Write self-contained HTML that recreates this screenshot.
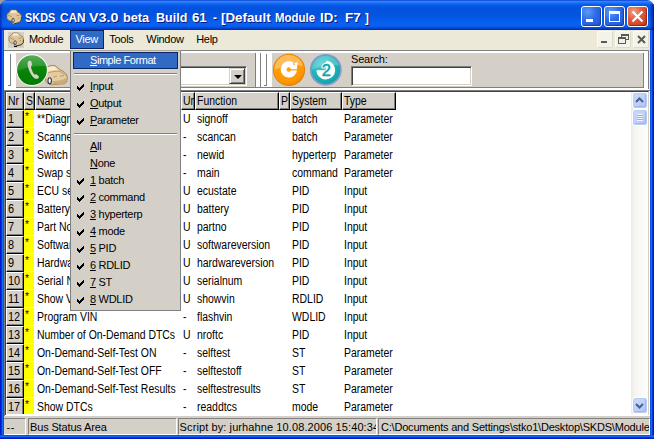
<!DOCTYPE html>
<html>
<head>
<meta charset="utf-8">
<title>SKDS CAN V3.0 beta</title>
<style>
*{box-sizing:border-box;margin:0;padding:0}
html,body{width:654px;height:439px;overflow:hidden;background:#fff}
body{position:relative;font-family:"Liberation Sans",sans-serif;font-size:11px;color:#000}
.abs{position:absolute}
#win{position:absolute;left:0;top:0;width:654px;height:439px;background:#0a3fd9;overflow:hidden}
.bl{position:absolute;top:30px;width:4px;height:409px}
#title{position:absolute;left:0;top:0;width:654px;height:30px;
 background:linear-gradient(to bottom,#0a3dd0 0,#2f83fb 1.5px,#1a70f4 3px,#0759e6 5px,#0453de 8px,#0453de 14px,#0558e6 18px,#0861f1 23px,#0860f0 26px,#0650dd 27.5px,#0038c0 29px,#002f9e 30px);
 border-radius:7px 7px 0 0}
.corner{position:absolute;top:0;width:8px;height:8px;background:#a39c8c}
.tt{position:absolute;top:9.5px;font-weight:bold;font-size:13px;color:#fff;white-space:pre;text-shadow:1px 1px 0 #0a1883;line-height:16px;transform-origin:0 0}
#client{position:absolute;left:4px;top:30px;width:646px;height:405px;background:#d4d0c8}
#menubar{position:absolute;left:4px;top:30px;width:646px;height:20px;background:#ece9d8}
.mi{position:absolute;top:30px;height:19px;line-height:19px;font-size:11px;white-space:pre;letter-spacing:-0.3px}
.mi.sel{background:#316ac5;color:#fff;border:1px solid #0a246a;line-height:17px}
/* grid */
#grid{position:absolute;left:6px;top:92px;width:642px;height:322px;background:#fff;overflow:hidden}
.hd{position:absolute;top:0;height:18px;background:#d4d0c8;border-top:1px solid #fff;border-left:1px solid #fff;border-right:1px solid #000;border-bottom:1px solid #000;box-shadow:inset -1px -1px 0 #808080;font-size:12px;line-height:17px;white-space:pre;overflow:hidden;padding-left:1.4px}
.hd b,.c{display:inline-block;font-weight:normal;transform:scaleX(.87);transform-origin:0 0;white-space:pre}
.row{position:absolute;left:0;width:626px;height:18px;font-size:12px;line-height:18px;white-space:pre}
.row span{position:absolute;top:0}
.nr{left:0;width:18px;height:18px;background:#d4d0c8;border-top:1px solid #fff;border-left:1px solid #fff;border-right:1px solid #000;border-bottom:1px solid #000;box-shadow:inset -1px -1px 0 #808080;line-height:15px;padding-left:1px;font-size:13px;overflow:hidden}
.nr i{font-style:normal;display:inline-block;transform:scaleX(.84);transform-origin:0 0;white-space:pre}
.s{left:18px;width:10px;height:17px;background:#ff0;font-size:10px;line-height:11px;padding-left:0;padding-top:2px;font-family:"Liberation Mono",monospace}
.n{left:31px}.u{left:177px}.f{left:191px}.sy{left:286px}.t{left:338px}
/* dropdown */
#menu{position:absolute;left:70px;top:50px;width:111px;height:261px;background:#d4d0c8;border:1px solid #808080;border-top-color:#aca899;z-index:5}
.it{position:absolute;left:2px;width:105px;height:17px;line-height:17px;font-size:11px;white-space:pre;padding-left:17px;letter-spacing:-0.3px}
.it.sel{background:#316ac5;color:#fff;border:1px solid #0a246a;line-height:15px;padding-left:16px;letter-spacing:-0.45px}
.it u{text-decoration:underline}
.sep{position:absolute;left:3px;width:103px;height:2px;border-top:1px solid #808080;border-bottom:1px solid #fff}
.ck{position:absolute;left:4px;top:6px;width:7px;height:7px}
.it.sel .ck{left:3px;top:4px}
/* status */
.sp{position:absolute;top:418px;height:17px;border-top:1px solid #808080;border-left:1px solid #808080;border-right:1px solid #fff;border-bottom:1px solid #fff;font-size:11px;line-height:17px;white-space:pre;overflow:hidden;padding-left:1px;background:#d4d0c8;letter-spacing:-0.15px}
.tb{position:absolute;top:6px;width:21px;height:21px;border:1px solid #fff;border-radius:3px;background:radial-gradient(circle at 30% 25%,#5a9bf8 0%,#2f6ae6 45%,#2353cf 100%);box-shadow:inset -1px -1px 1px rgba(0,20,120,.45)}
.tb.cl{background:radial-gradient(circle at 30% 25%,#f2a080 0%,#e0563a 45%,#c03815 100%);box-shadow:inset -1px -1px 1px rgba(100,10,0,.5)}
.mdi{position:absolute;top:31px;width:16px;height:17px;background:#f4f3ea;border:1px solid #fbfaf4;border-right-color:#dedbcb;border-bottom-color:#dedbcb;border-radius:2px}
.gr{position:absolute;top:54px;width:3px;height:32px;border-right:1px solid #808080;border-bottom:1px solid #808080}
.sunk{background:#fff;border:1px solid #808080;border-right-color:#fff;border-bottom-color:#fff;box-shadow:inset 1px 1px 0 #404040,inset -1px -1px 0 #d4d0c8}
#sb{position:absolute;left:625px;top:0;width:17px;height:322px;background:linear-gradient(to right,#ecebe3 0,#f6f5f0 4px,#fbfbf8 12px,#fdfdfb 100%)}
.sbb{position:absolute;left:1px;width:16px;height:17px;border:1px solid #fff;border-radius:3.5px;background:linear-gradient(135deg,#cbd9fd 0%,#bdcffb 55%,#aec0f3 100%);box-shadow:inset 0 0 0 1px #b9caf5, inset -1px -1px 0 1px #a4b8ec}
</style>
</head>
<body>
<div id="win">
 <div class="corner" style="left:0"></div><div class="corner" style="right:0;background:#fff"></div>
 <div id="title">
  <div class="abs" style="left:0;top:4px;width:3px;height:26px;background:linear-gradient(to right,rgba(0,10,140,.55),rgba(0,10,140,0))"></div>
  <div class="abs" style="left:650px;top:4px;width:4px;height:26px;background:linear-gradient(to left,rgba(0,8,120,.75),rgba(0,8,120,0))"></div>
  <svg class="abs" style="left:0;top:0" width="0" height="0"><defs><g id="car"><path d="M2.2 4 C4 2.2 8 1.6 10.5 2.2 C12.5 3.5 14 5.2 15.5 6.3 C18.5 7.6 21 9.2 22.3 11.5 C23 13.5 22.8 16.5 22 18.5 C21 20 19 20.6 17 20.4 L8 21.2 C6.5 21.4 5 21 4 20 C2.4 19.6 1.4 18.4 1.2 16.5 L1 8 C1 6.2 1.4 5 2.2 4 Z" fill="#e4cca2" stroke="#9c7c48" stroke-width="0.9"/><path d="M3 4.6 C5 3 8 2.6 10.2 3 L13.6 6.6 C10 6.4 6 7 3.2 8.4 Z" fill="#f6ead2"/><path d="M3.2 9.6 C7 8 11 7.6 14.6 7.8 C17.5 8.8 20 10.4 21.4 12.2 M9 13.4 L12.5 12.6 M15.5 12.8 L19.5 11.8" stroke="#b8945c" stroke-width="0.9" fill="none"/><path d="M8 21 L17 20.2 C19.5 20.2 21.4 19.4 22 17.6 L22.4 14 C20 16 14 17.5 8.5 17.6 Z" fill="#cdaa78"/><ellipse cx="5.2" cy="17.2" rx="1.7" ry="3" fill="#fff" stroke="#2a2a50" stroke-width="1.1"/></g><g id="scar"><path d="M1 5.2 L3.4 3.2 L5 1 L10.2 1 L11.6 3 L14.6 5 L15.6 8 L15.5 11 L13.6 13.6 L8 15 L6.4 14.6 L6 12.2 L3 11.6 L1 9.6 Z" fill="#dfc69a" stroke="#8c6e3e" stroke-width="0.7"/><path d="M5.2 1.6 L10 1.6 L11 3.6 L4.4 3.9 Z" fill="#f7ecd6"/><path d="M15.4 8 L15.3 11 L13.5 13.5 L8 14.9" stroke="#3a3010" stroke-width="0.9" fill="none"/><path d="M2 6 L6 8 M10.5 6.8 L13.5 6.2 M11.8 9.4 L13.2 9" stroke="#a8864e" stroke-width="0.8" fill="none"/><ellipse cx="7.1" cy="11.4" rx="1.1" ry="2.1" fill="#fff" stroke="#2a2444" stroke-width="0.9"/></g></defs></svg>
  <svg class="abs" style="left:5.5px;top:8.5px" width="16" height="16" viewBox="0 0 16 16"><use href="#scar"/></svg>
  <div class="tb" style="left:581px"><div class="abs" style="left:4px;top:12px;width:7px;height:3px;background:#fff"></div></div>
  <div class="tb" style="left:604px"><div class="abs" style="left:4px;top:4px;width:11px;height:11px;border:1px solid #fff;border-top-width:3px"></div></div>
  <div class="tb cl" style="left:627px"><svg class="abs" style="left:3px;top:3px" width="13" height="13" viewBox="0 0 13 13"><path d="M1.5 1.5 L11.5 11.5 M11.5 1.5 L1.5 11.5" stroke="#fff" stroke-width="2.2" fill="none"/></svg></div>
  <span class="tt" style="left:25.4px;transform:scaleX(0.839)">SKDS</span><span class="tt" style="left:59.5px;transform:scaleX(0.912)">CAN</span><span class="tt" style="left:88.5px;transform:scaleX(1.103)">V3.0</span><span class="tt" style="left:122.5px;transform:scaleX(0.980)">beta</span><span class="tt" style="left:156.1px;transform:scaleX(0.963)">Build</span><span class="tt" style="left:191.7px;transform:scaleX(1.016)">61</span><span class="tt" style="left:213.1px;transform:scaleX(0.899)">-</span><span class="tt" style="left:220.8px;transform:scaleX(1.025)">[Default</span><span class="tt" style="left:274.9px;transform:scaleX(0.879)">Module</span><span class="tt" style="left:320.2px;transform:scaleX(1.021)">ID:</span><span class="tt" style="left:344.5px;transform:scaleX(1.035)">F7</span><span class="tt" style="left:364.5px;transform:scaleX(0.899)">]</span>
 </div>
 <div class="bl" style="left:0;background:linear-gradient(to right,#0019cf 0,#0019cf 1px,#0831d9 1px,#0831d9 2px,#166aee 2px,#166aee 3px,#0855dd 3px)"></div>
 <div class="bl" style="left:650px;background:linear-gradient(to left,#0019cf 0,#0019cf 1px,#0831d9 1px,#0831d9 2px,#166aee 2px,#166aee 3px,#0855dd 3px)"></div>
 <div class="abs" style="left:0;top:435px;width:654px;height:4px;background:linear-gradient(to top,#0019cf 0,#0019cf 1px,#0831d9 1px,#0831d9 2px,#166aee 2px,#166aee 3px,#0855dd 3px)"></div>
 <div id="client"></div>
 <div id="menubar"></div>
 <!-- menu bar -->
 <div class="abs" style="left:8px;top:32px;width:16px;height:16px;background:#d4d0c8"></div>
 <svg class="abs" style="left:8px;top:31.5px" width="16" height="15" viewBox="0 0 16 16" preserveAspectRatio="none"><use href="#scar"/></svg>
 <div class="abs" style="left:14px;top:46px;width:3px;height:1px;background:#000"></div>
 <div class="mi" style="left:29px">Module</div>
 <div class="mi sel" style="left:70px;width:34px;padding-left:4.5px">View</div>
 <div class="mi" style="left:109.3px">Tools</div>
 <div class="mi" style="left:146.3px">Window</div>
 <div class="mi" style="left:196.2px">Help</div>
 <div class="mdi" style="left:597px"><div class="abs" style="left:3px;top:9px;width:6px;height:2px;background:#5a5a52"></div></div>
 <div class="mdi" style="left:615px"><div class="abs" style="left:5px;top:2px;width:8px;height:6px;border:1px solid #5a5a52;border-top-width:2px"></div><div class="abs" style="left:2px;top:5px;width:8px;height:7px;border:1px solid #5a5a52;border-top-width:2px;background:#f4f2e8"></div></div>
 <div class="mdi" style="left:633px"><svg class="abs" style="left:3px;top:3px" width="9" height="9" viewBox="0 0 9 9"><path d="M1 1 L8 8 M8 1 L1 8" stroke="#5a5a52" stroke-width="2" fill="none"/></svg></div>
 <!-- toolbar -->
 <div class="abs" style="left:4px;top:50px;width:646px;height:1px;background:#808080"></div>
 <div class="abs" style="left:4px;top:51px;width:646px;height:39px;background:#fff"></div>
 <div class="abs" style="left:648px;top:50px;width:1px;height:39px;background:#808080"></div>
 <div class="abs" style="left:649px;top:50px;width:1px;height:40px;background:#ece9d8"></div>
 <div class="abs" style="left:16px;top:53px;width:240px;height:35px;background:#d4d0c8;border-right:1px solid #808080;border-bottom:1px solid #808080"></div>
 <div class="abs" style="left:260px;top:53px;width:1px;height:35px;background:#808080"></div>
 <div class="abs" style="left:272px;top:53px;width:372px;height:35px;background:#d4d0c8;border-right:1px solid #808080;border-bottom:1px solid #808080"></div>
 <div class="abs" style="left:256px;top:87px;width:16px;height:1px;background:#808080"></div>
 <div class="gr" style="left:8px"></div>
 <div class="gr" style="left:264px"></div>
 <!-- green phone + car -->
 <svg class="abs" style="left:15px;top:52px" width="54" height="36" viewBox="0 0 54 36">
  <defs>
   <linearGradient id="gg" x1="0" y1="0" x2="0" y2="1"><stop offset="0" stop-color="#138c13"/><stop offset="1" stop-color="#007c00"/></linearGradient>
   <linearGradient id="gl" x1="0" y1="0" x2="0" y2="1"><stop offset="0" stop-color="#fff" stop-opacity=".30"/><stop offset="1" stop-color="#fff" stop-opacity=".10"/></linearGradient>
  </defs>
  <g transform="translate(29.5,11.5)"><use href="#car"/></g>
  <circle cx="17" cy="18.1" r="15.9" fill="#fff"/>
  <circle cx="17" cy="18.1" r="14.9" fill="url(#gg)"/>
  <path d="M2.4 19 A14.6 14.6 0 0 1 31.2 14 C21 13.5 10 15.5 2.4 19 Z" fill="url(#gl)"/>
  <path d="M13.2 9.6 C14.2 8.4 16.2 8.6 16.6 10.2 L17 12.6 C17.2 13.6 16 14 15.9 14.8 C16.4 17.6 17.6 20.4 19.2 22.4 C19.9 22.6 20.6 21.9 21.5 22.4 L23.3 23.8 C24.4 24.8 23.8 26.4 22.4 26.7 C20.8 27.1 19 26.4 17.8 24.8 C15 21.4 13.2 16.8 12.7 13 C12.5 11.6 12.5 10.5 13.2 9.6 Z" fill="#d6d3ca"/>
 </svg>
 <!-- combo -->
 <div class="abs sunk" style="left:101px;top:66px;width:146px;height:20px"></div>
 <div class="abs" style="left:229px;top:68px;width:16px;height:16px;background:#d4d0c8;border:1px solid #d4d0c8;border-right-color:#404040;border-bottom-color:#404040;box-shadow:inset 1px 1px 0 #fff,inset -1px -1px 0 #808080"><div class="abs" style="left:3.5px;top:6px;width:0;height:0;border-left:4px solid transparent;border-right:4px solid transparent;border-top:4px solid #000"></div></div>
 <!-- orange -->
 <svg class="abs" style="left:272px;top:53px" width="34" height="34" viewBox="0 0 34 34">
  <defs><radialGradient id="og" cx="0.45" cy="0.4" r="0.62"><stop offset="0" stop-color="#ffa21a"/><stop offset="0.8" stop-color="#ff9800"/><stop offset="1" stop-color="#f08a00"/></radialGradient></defs>
  <circle cx="17" cy="16.8" r="16.1" fill="#e2820a"/>
  <circle cx="17" cy="16.8" r="15.2" fill="url(#og)"/>
  <path d="M2.6 17 A14.4 14.4 0 0 1 31 13 C21 11 9 13 2.6 17 Z" fill="#fff" fill-opacity=".33"/>
  <path d="M16.8 8.2 A8.2 8.2 0 1 0 25 17.4 L18.9 17.4 A2.3 2.3 0 1 1 16.8 14.2 A2.3 2.3 0 0 1 18.9 16.3 L24.9 16.3 L25.6 9 L22.6 10.2 A8.2 8.2 0 0 0 16.8 8.2 Z" fill="#fff"/>
  <path d="M21 9.4 L23.2 11.6 L21.4 12 Z" fill="#ff9c0c"/>
 </svg>
 <!-- teal -->
 <svg class="abs" style="left:309px;top:53px" width="34" height="34" viewBox="0 0 34 34">
  <defs><radialGradient id="tg" cx="0.4" cy="0.35" r="0.75"><stop offset="0" stop-color="#4fcfd0"/><stop offset="0.55" stop-color="#1fb6b8"/><stop offset="1" stop-color="#0c9ea2"/></radialGradient></defs>
  <circle cx="16.8" cy="16.8" r="15.9" fill="#8798cc"/>
  <circle cx="16.8" cy="16.8" r="14.2" fill="url(#tg)"/>
  <path d="M3 17 A13.8 13.8 0 0 1 30 12.6 C21 10.6 9 13 3 17 Z" fill="#fff" fill-opacity=".22"/>
  <path d="M16.8 17.2 L7.4 17.2 A9.4 9.4 0 1 0 18.8 7.9 C17.4 7.6 16.8 8.4 16.8 9.6 Z" fill="#fff"/>
  <text x="17.4" y="23.4" font-family="Liberation Sans, sans-serif" font-size="16.5" fill="#fff" text-anchor="middle" stroke="#fff" stroke-width="2.4" stroke-linejoin="round">2</text><text x="17.4" y="23.4" font-family="Liberation Sans, sans-serif" font-size="16.5" fill="#0fa4a8" text-anchor="middle" stroke="#0fa4a8" stroke-width="0.5">2</text>
 </svg>
 <div class="abs" style="left:351px;top:52px;font-size:11px;line-height:14px;letter-spacing:-0.2px">Search:</div>
 <div class="abs sunk" style="left:351px;top:66px;width:121px;height:20px"></div>
 <!-- grid frame -->
 <div class="abs" style="left:4px;top:90px;width:646px;height:326px;background:#fff;border-left:1px solid #808080;border-top:1px solid #808080"></div>
 <div class="abs" style="left:5px;top:91px;width:644px;height:324px;border-left:1px solid #404040;border-top:1px solid #404040;border-right:1px solid #d4d0c8"></div>
 <div id="grid">
  <div class="hd" style="left:0;width:18px"><b>Nr</b></div>
  <div class="hd" style="left:18px;width:11px"><b>S</b></div>
  <div class="hd" style="left:29px;width:146px"><b>Name</b></div>
  <div class="hd" style="left:175px;width:14px"><b>Unit</b></div>
  <div class="hd" style="left:189px;width:84px"><b>Function</b></div>
  <div class="hd" style="left:273px;width:11px"><b>P</b></div>
  <div class="hd" style="left:284px;width:52px"><b>System</b></div>
  <div class="hd" style="left:336px;width:54px"><b>Type</b></div>
  <div id="sb">
   <div class="sbb" style="top:0"><svg class="abs" style="left:1.7px;top:4px" width="9" height="6" viewBox="0 0 9 6"><path d="M1 5 L4.5 1.5 L8 5" stroke="#4d6185" stroke-width="2" fill="none"/></svg></div>
   <div class="sbb" style="top:17px"><div class="abs" style="left:4px;top:4px;width:6px;height:7px;background:repeating-linear-gradient(to bottom,#eef4fe 0,#eef4fe 1px,#8cb0f8 1px,#8cb0f8 2px)"></div></div>
   <div class="sbb" style="top:305px"><svg class="abs" style="left:1.7px;top:5px" width="9" height="6" viewBox="0 0 9 6"><path d="M1 1 L4.5 4.5 L8 1" stroke="#4d6185" stroke-width="2" fill="none"/></svg></div>
  </div>
   <div class="row" style="top:18px"><span class="nr"><i>1</i></span><span class="s">*</span><span class="c n">**Diagnostic Session</span><span class="c u">U</span><span class="c f">signoff</span><span class="c sy">batch</span><span class="c t">Parameter</span></div>
   <div class="row" style="top:36px"><span class="nr"><i>2</i></span><span class="s">*</span><span class="c n">Scanner</span><span class="c u">-</span><span class="c f">scancan</span><span class="c sy">batch</span><span class="c t">Parameter</span></div>
   <div class="row" style="top:54px"><span class="nr"><i>3</i></span><span class="s">*</span><span class="c n">Switch to new ID</span><span class="c u">-</span><span class="c f">newid</span><span class="c sy">hyperterp</span><span class="c t">Parameter</span></div>
   <div class="row" style="top:72px"><span class="nr"><i>4</i></span><span class="s">*</span><span class="c n">Swap scripts</span><span class="c u">-</span><span class="c f">main</span><span class="c sy">command</span><span class="c t">Parameter</span></div>
   <div class="row" style="top:90px"><span class="nr"><i>5</i></span><span class="s">*</span><span class="c n">ECU security state</span><span class="c u">U</span><span class="c f">ecustate</span><span class="c sy">PID</span><span class="c t">Input</span></div>
   <div class="row" style="top:108px"><span class="nr"><i>6</i></span><span class="s">*</span><span class="c n">Battery Voltage</span><span class="c u">U</span><span class="c f">battery</span><span class="c sy">PID</span><span class="c t">Input</span></div>
   <div class="row" style="top:126px"><span class="nr"><i>7</i></span><span class="s">*</span><span class="c n">Part No.</span><span class="c u">U</span><span class="c f">partno</span><span class="c sy">PID</span><span class="c t">Input</span></div>
   <div class="row" style="top:144px"><span class="nr"><i>8</i></span><span class="s">*</span><span class="c n">Software Version</span><span class="c u">U</span><span class="c f">softwareversion</span><span class="c sy">PID</span><span class="c t">Input</span></div>
   <div class="row" style="top:162px"><span class="nr"><i>9</i></span><span class="s">*</span><span class="c n">Hardware Version</span><span class="c u">U</span><span class="c f">hardwareversion</span><span class="c sy">PID</span><span class="c t">Input</span></div>
   <div class="row" style="top:180px"><span class="nr"><i>10</i></span><span class="s">*</span><span class="c n">Serial Number</span><span class="c u">U</span><span class="c f">serialnum</span><span class="c sy">PID</span><span class="c t">Input</span></div>
   <div class="row" style="top:198px"><span class="nr"><i>11</i></span><span class="s">*</span><span class="c n">Show VIN</span><span class="c u">U</span><span class="c f">showvin</span><span class="c sy">RDLID</span><span class="c t">Input</span></div>
   <div class="row" style="top:216px"><span class="nr"><i>12</i></span><span class="s">*</span><span class="c n">Program VIN</span><span class="c u">-</span><span class="c f">flashvin</span><span class="c sy">WDLID</span><span class="c t">Input</span></div>
   <div class="row" style="top:234px"><span class="nr"><i>13</i></span><span class="s">*</span><span class="c n">Number of On-Demand DTCs</span><span class="c u">U</span><span class="c f">nroftc</span><span class="c sy">PID</span><span class="c t">Input</span></div>
   <div class="row" style="top:252px"><span class="nr"><i>14</i></span><span class="s">*</span><span class="c n">On-Demand-Self-Test ON</span><span class="c u">-</span><span class="c f">selftest</span><span class="c sy">ST</span><span class="c t">Parameter</span></div>
   <div class="row" style="top:270px"><span class="nr"><i>15</i></span><span class="s">*</span><span class="c n">On-Demand-Self-Test OFF</span><span class="c u">-</span><span class="c f">selftestoff</span><span class="c sy">ST</span><span class="c t">Parameter</span></div>
   <div class="row" style="top:288px"><span class="nr"><i>16</i></span><span class="s">*</span><span class="c n">On-Demand-Self-Test Results</span><span class="c u">-</span><span class="c f">selftestresults</span><span class="c sy">ST</span><span class="c t">Parameter</span></div>
   <div class="row" style="top:306px"><span class="nr"><i>17</i></span><span class="s">*</span><span class="c n">Show DTCs</span><span class="c u">-</span><span class="c f">readdtcs</span><span class="c sy">mode</span><span class="c t">Parameter</span></div>
 </div>
 <div id="menu">
   <div class="it sel" style="top:1px"><u>S</u>imple Format</div>
   <div class="sep" style="top:22px"></div>
   <div class="it " style="top:27px"><svg class="ck" viewBox="0 0 7 7" shape-rendering="crispEdges"><path d="M0 2H1V3H2V4H3V3H4V2H5V1H6V0H7V3H6V4H5V5H4V6H3V7H2V6H1V5H0Z" fill="#000"/></svg><u>I</u>nput</div>
   <div class="it " style="top:44px"><svg class="ck" viewBox="0 0 7 7" shape-rendering="crispEdges"><path d="M0 2H1V3H2V4H3V3H4V2H5V1H6V0H7V3H6V4H5V5H4V6H3V7H2V6H1V5H0Z" fill="#000"/></svg><u>O</u>utput</div>
   <div class="it " style="top:61px"><svg class="ck" viewBox="0 0 7 7" shape-rendering="crispEdges"><path d="M0 2H1V3H2V4H3V3H4V2H5V1H6V0H7V3H6V4H5V5H4V6H3V7H2V6H1V5H0Z" fill="#000"/></svg><u>P</u>arameter</div>
   <div class="sep" style="top:82px"></div>
   <div class="it " style="top:87px"><u>A</u>ll</div>
   <div class="it " style="top:104px"><u>N</u>one</div>
   <div class="it " style="top:121px"><svg class="ck" viewBox="0 0 7 7" shape-rendering="crispEdges"><path d="M0 2H1V3H2V4H3V3H4V2H5V1H6V0H7V3H6V4H5V5H4V6H3V7H2V6H1V5H0Z" fill="#000"/></svg><u>1</u> batch</div>
   <div class="it " style="top:138px"><svg class="ck" viewBox="0 0 7 7" shape-rendering="crispEdges"><path d="M0 2H1V3H2V4H3V3H4V2H5V1H6V0H7V3H6V4H5V5H4V6H3V7H2V6H1V5H0Z" fill="#000"/></svg><u>2</u> command</div>
   <div class="it " style="top:155px"><svg class="ck" viewBox="0 0 7 7" shape-rendering="crispEdges"><path d="M0 2H1V3H2V4H3V3H4V2H5V1H6V0H7V3H6V4H5V5H4V6H3V7H2V6H1V5H0Z" fill="#000"/></svg><u>3</u> hyperterp</div>
   <div class="it " style="top:172px"><svg class="ck" viewBox="0 0 7 7" shape-rendering="crispEdges"><path d="M0 2H1V3H2V4H3V3H4V2H5V1H6V0H7V3H6V4H5V5H4V6H3V7H2V6H1V5H0Z" fill="#000"/></svg><u>4</u> mode</div>
   <div class="it " style="top:189px"><svg class="ck" viewBox="0 0 7 7" shape-rendering="crispEdges"><path d="M0 2H1V3H2V4H3V3H4V2H5V1H6V0H7V3H6V4H5V5H4V6H3V7H2V6H1V5H0Z" fill="#000"/></svg><u>5</u> PID</div>
   <div class="it " style="top:206px"><svg class="ck" viewBox="0 0 7 7" shape-rendering="crispEdges"><path d="M0 2H1V3H2V4H3V3H4V2H5V1H6V0H7V3H6V4H5V5H4V6H3V7H2V6H1V5H0Z" fill="#000"/></svg><u>6</u> RDLID</div>
   <div class="it " style="top:223px"><svg class="ck" viewBox="0 0 7 7" shape-rendering="crispEdges"><path d="M0 2H1V3H2V4H3V3H4V2H5V1H6V0H7V3H6V4H5V5H4V6H3V7H2V6H1V5H0Z" fill="#000"/></svg><u>7</u> ST</div>
   <div class="it " style="top:240px"><svg class="ck" viewBox="0 0 7 7" shape-rendering="crispEdges"><path d="M0 2H1V3H2V4H3V3H4V2H5V1H6V0H7V3H6V4H5V5H4V6H3V7H2V6H1V5H0Z" fill="#000"/></svg><u>8</u> WDLID</div>
 </div>
 <!-- status -->
 <div class="sp" style="left:4px;width:22px;border-left:none;padding-left:2.5px;letter-spacing:0.6px">--</div>
 <div class="sp" style="left:28px;width:149px">Bus Status Area</div>
 <div class="sp" style="left:178px;width:199px;letter-spacing:0.1px;padding-left:0.6px">Script by: jurhahne 10.08.2006 15:40:34</div>
 <div class="sp" style="left:378px;width:272px;letter-spacing:-0.2px;padding-left:2px">C:\Documents and Settings\stko1\Desktop\SKDS\Modules</div>
</div>
</body>
</html>
